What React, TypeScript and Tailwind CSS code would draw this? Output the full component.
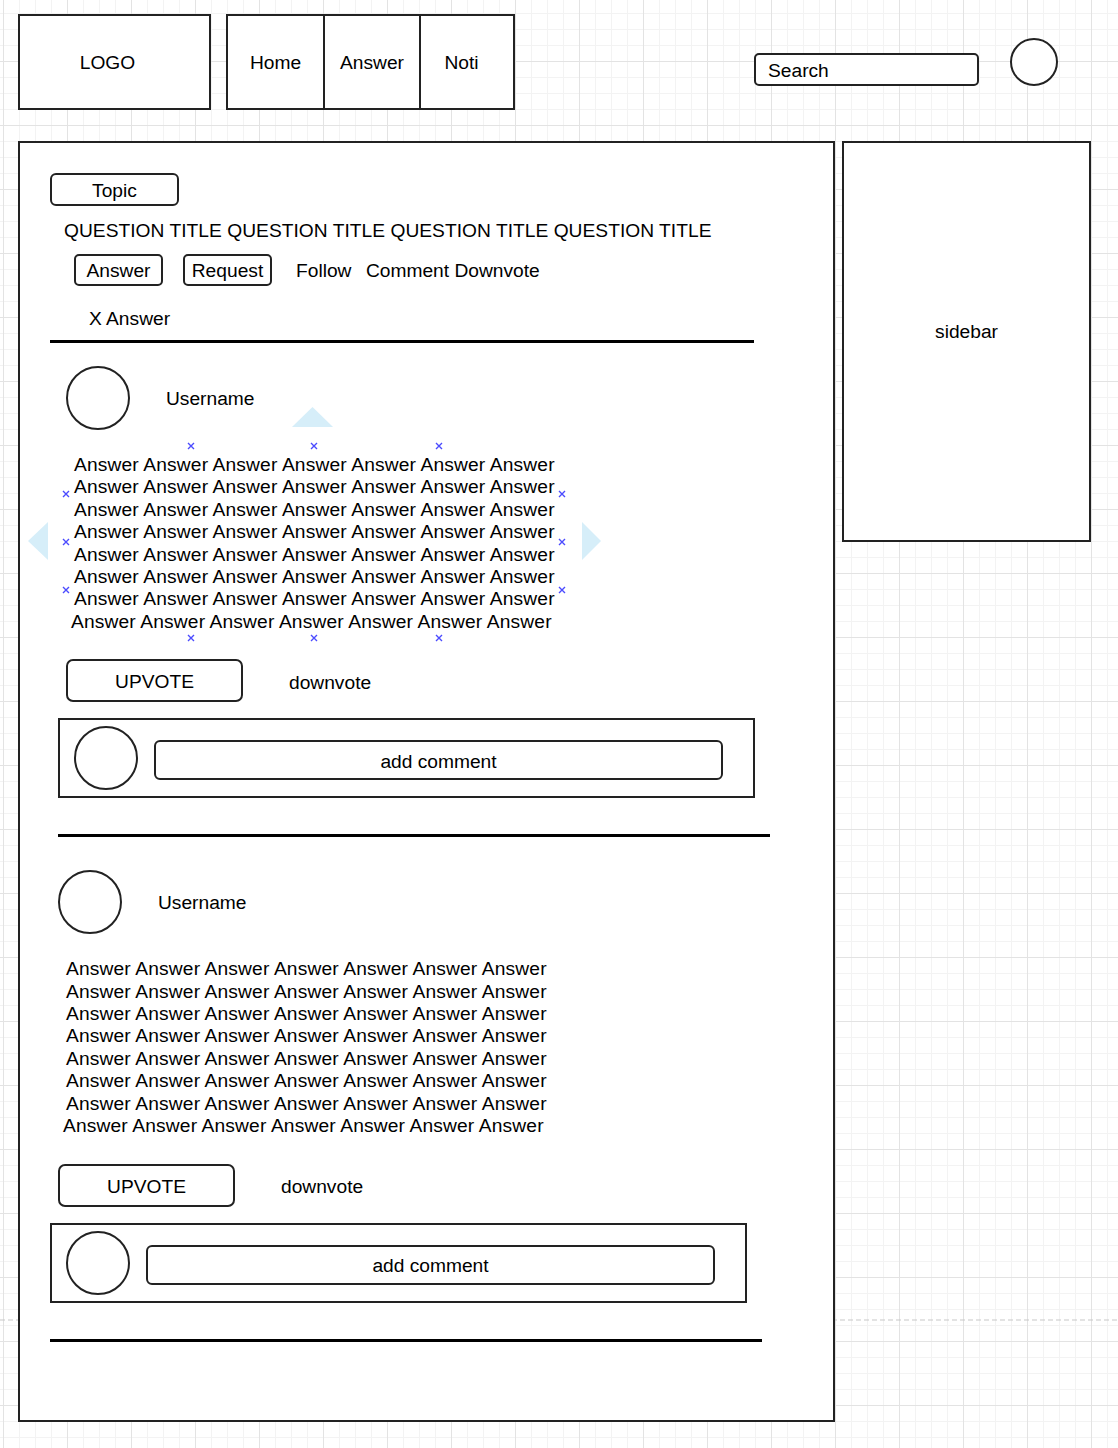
import React from "react";

const FONT = "font-['Liberation_Sans',Arial,Helvetica,sans-serif]";

function XMark({ x, y }: { x: number; y: number }) {
  return (
    <svg
      className="absolute"
      style={{ left: x - 4, top: y - 4 }}
      width="8"
      height="8"
      viewBox="0 0 8 8"
    >
      <path d="M1 1 L7 7 M7 1 L1 7" stroke="#4b4bff" strokeWidth="1.4" />
    </svg>
  );
}

function Tri({ x, y, w, h, dir }: { x: number; y: number; w: number; h: number; dir: "up" | "left" | "right" }) {
  const pts =
    dir === "up"
      ? `0,${h} ${w / 2},0 ${w},${h}`
      : dir === "left"
      ? `${w},0 0,${h / 2} ${w},${h}`
      : `0,0 ${w},${h / 2} 0,${h}`;
  return (
    <svg className="absolute" style={{ left: x, top: y }} width={w} height={h} viewBox={`0 0 ${w} ${h}`}>
      <polygon points={pts} fill="#d6eef9" />
    </svg>
  );
}

const LINE = "Answer Answer Answer Answer Answer Answer Answer";

function AnswerBlock({ base }: { base: number }) {
  return (
    <div className="flex flex-col">
      <div className="flex items-center" style={{ marginLeft: base }}>
        <div className="w-[64px] h-[64px] rounded-full border-2 border-[#222] bg-white" />
        <div className="ml-[36px] leading-[24px] pt-[2px]">Username</div>
      </div>
      <div
        className="mt-[23px] pt-[1px] flex flex-col leading-[22.4px] whitespace-nowrap tracking-[0.15px]"
        style={{ marginLeft: base + 8 }}
      >
        {[0, 1, 2, 3, 4, 5, 6].map((i) => (
          <div key={i}>{LINE}</div>
        ))}
        <div className="-ml-[3px]">{LINE}</div>
      </div>
      <div className="mt-[26px] flex items-center" style={{ marginLeft: base }}>
        <div className="w-[177px] h-[43px] rounded-[7px] border-2 border-[#222] bg-white flex items-center justify-center pt-[4px]">
          UPVOTE
        </div>
        <div className="ml-[46px] pt-[5px]">downvote</div>
      </div>
      <div
        className="mt-[16px] w-[697px] h-[80px] border-2 border-[#222] bg-white flex items-start"
        style={{ marginLeft: base - 8 }}
      >
        <div className="ml-[14px] mt-[6px] w-[64px] h-[64px] rounded-full border-2 border-[#222] bg-white" />
        <div className="ml-[16px] mt-[20px] w-[569px] h-[40px] rounded-[6px] border-2 border-[#222] bg-white flex items-center justify-center pt-[4px]">
          add comment
        </div>
      </div>
    </div>
  );
}

export default function App() {
  return (
    <div
      className={`relative w-[1118px] h-[1448px] overflow-hidden bg-white text-black text-[19.2px] ${FONT} [background-image:linear-gradient(to_right,#e3e3e3_1px,transparent_1px),linear-gradient(to_bottom,#e3e3e3_1px,transparent_1px),linear-gradient(to_right,#f3f3f3_1px,transparent_1px),linear-gradient(to_bottom,#f3f3f3_1px,transparent_1px)] [background-size:64px_64px,64px_64px,16px_16px,16px_16px] [background-position:3px_-3px,3px_-3px,3px_-3px,3px_-3px]`}
    >
      {/* page break dashed line */}
      <svg className="absolute left-0 top-[1319px]" width="1118" height="2">
        <line x1="0" y1="1" x2="1118" y2="1" stroke="#c8c8c8" strokeWidth="1.2" strokeDasharray="5 3" />
      </svg>

      {/* Header */}
      <div className="relative flex items-start pt-[14px] pl-[18px]">
        <div className="w-[193px] h-[96px] border-2 border-[#222] bg-white flex items-center justify-center pt-[2px] pr-[14px]">
          LOGO
        </div>
        <div className="ml-[15px] w-[289px] h-[96px] border-2 border-[#222] bg-white flex">
          <div className="w-[95px] h-full flex items-center justify-center pt-[2px]">Home</div>
          <div className="w-[96px] h-full border-l-2 border-[#222] flex items-center justify-center pt-[2px]">Answer</div>
          <div className="flex-1 h-full border-l-2 border-[#222] flex items-center justify-center pt-[2px] pr-[11px]">
            Noti
          </div>
        </div>
        <div className="ml-[239px] mt-[39px] w-[225px] h-[33px] rounded-[5px] border-2 border-[#222] bg-white flex items-center pl-[12px] pt-[4px]">
          Search
        </div>
        <div className="ml-[31px] mt-[24px] w-[48px] h-[48px] rounded-full border-2 border-[#222] bg-white" />
      </div>

      {/* Body */}
      <div className="relative flex items-start mt-[31px] pl-[18px]">
        <div className="relative w-[817px] h-[1281px] border-2 border-[#222] bg-white flex flex-col">
          <div className="ml-[30px] mt-[30px] w-[129px] h-[33px] rounded-[6px] border-2 border-[#222] flex items-center justify-center pt-[4px]">
            Topic
          </div>
          <div className="ml-[44px] mt-[12px] h-[24px] pt-[1px] leading-[24px] whitespace-nowrap tracking-[0.03px]">
            QUESTION TITLE QUESTION TITLE QUESTION TITLE QUESTION TITLE
          </div>
          <div className="mt-[12px] h-[32px] flex items-center whitespace-nowrap">
            <div className="ml-[54px] w-[89px] h-[32px] rounded-[5px] border-2 border-[#222] flex items-center justify-center pt-[2px]">
              Answer
            </div>
            <div className="ml-[20px] w-[89px] h-[32px] rounded-[5px] border-2 border-[#222] flex items-center justify-center pt-[2px]">
              Request
            </div>
            <div className="ml-[24px] pt-[2px]">Follow</div>
            <div className="ml-[14.5px] pt-[2px]">Comment Downvote</div>
          </div>
          <div className="ml-[69px] mt-[20px] h-[24px] pt-[1px] leading-[24px]">X Answer</div>
          <div className="ml-[30px] mt-[10px] w-[704px] h-[3px] bg-black" />

          <div className="mt-[23px]">
            <AnswerBlock base={46} />
          </div>
          <div className="ml-[38px] mt-[36px] w-[712px] h-[3px] bg-black" />

          <div className="mt-[33px]">
            <AnswerBlock base={38} />
          </div>
          <div className="ml-[30px] mt-[36px] w-[712px] h-[3px] bg-black" />

          {/* selection handles overlay (coords relative to main box) */}
          <Tri x={272} y={264} w={41} h={20} dir="up" />
          <Tri x={8} y={379} w={20} h={38} dir="left" />
          <Tri x={562} y={379} w={19} h={38} dir="right" />
          {[171, 294, 419].map((x) => (
            <XMark key={"t" + x} x={x} y={303} />
          ))}
          {[171, 294, 419].map((x) => (
            <XMark key={"b" + x} x={x} y={495} />
          ))}
          {[351, 399, 447].map((y) => (
            <XMark key={"l" + y} x={46} y={y} />
          ))}
          {[351, 399, 447].map((y) => (
            <XMark key={"r" + y} x={542} y={y} />
          ))}
        </div>

        <div className="ml-[7px] w-[249px] h-[401px] border-2 border-[#222] bg-white flex justify-center pt-[177px] leading-[24px]">
          sidebar
        </div>
      </div>
    </div>
  );
}
